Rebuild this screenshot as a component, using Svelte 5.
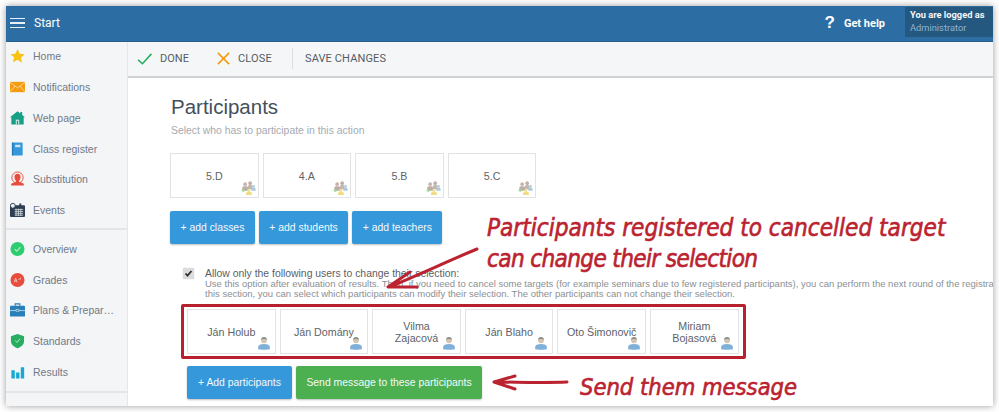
<script>
  const nav1 = [
    ['Home', 'star'], ['Notifications', 'mail'], ['Web page', 'house'],
    ['Class register', 'book'], ['Substitution', 'sub'], ['Events', 'cal']
  ];
  const nav2 = [
    ['Overview', 'ok'], ['Grades', 'grades'], ['Plans & Prepar…', 'case'],
    ['Standards', 'shield'], ['Results', 'bars']
  ];
  const classes = ['5.D', '4.A', '5.B', '5.C'];
  const people = ['Ján Holub', 'Ján Domány', 'Vilma\nZajacová', 'Ján Blaho', 'Oto Šimonovič', 'Miriam\nBojasová'];
</script>

{#snippet icon(kind)}
  <svg class="nav-icon" viewBox="0 0 16 16" width="16" height="16">
    {#if kind === 'star'}
      <path fill="#f6c213" d="M8 .6l2.3 4.9 5.3.7-3.9 3.7 1 5.4L8 12l-4.7 2.7 1-5.4L.4 6.2l5.3-.7z"/>
    {:else if kind === 'mail'}
      <rect y="2.5" width="16" height="11" fill="#f39c12"/>
      <path d="M0 3l8 6 8-6M0 13l5.5-6M16 13l-5.5-6" fill="none" stroke="#fbdca6" stroke-width=".9"/>
    {:else if kind === 'house'}
      <path fill="#16a085" d="M8 .8l3 2.4V1.6h2v3.2l3 2.4h-1.4V15H1.4V7.2H0z"/>
      <rect x="6.2" y="9.8" width="3.6" height="5.2" fill="#e6f3f0"/><rect x="7.2" y="10.8" width="1.6" height="4.2" fill="#16a085"/>
    {:else if kind === 'book'}
      <rect x="2.5" y="1" width="11" height="14" rx="1" fill="#3498db"/>
      <rect x="2" y="1" width="1.4" height="14" fill="#2578b5"/>
      <rect x="5.5" y="3.5" width="5.5" height="2.6" fill="#cfe6f7"/>
    {:else if kind === 'sub'}
      <circle cx="8" cy="6.5" r="6" fill="none" stroke="#e74c3c" stroke-width="1"/>
      <path fill="#e74c3c" d="M8 2.5a3.2 3.6 0 0 1 3.2 3.8c0 1.6-.8 2.8-1.6 3.6v1l4.2 1.6c.8.4 1 1.2 1 2.5H1.2c0-1.3.2-2.1 1-2.5l4.2-1.6v-1C5.600 9.100 4.800 7.900 4.800 6.300A3.200 3.600 0 0 1 8 2.500z"/>
    {:else if kind === 'cal'}
      <rect y="3" width="16" height="12.500" rx="1" fill="#2c3e50"/>
      <circle cx="3" cy="3.500" r="2.600" fill="#ecf0f1" stroke="#2c3e50"/>
      <rect x="10" y="1" width="2" height="3" fill="#2c3e50"/>
      <path d="M5 7.500h9M5 9.500h9M5 11.500h9M5 13.500h9M6.500 6.500v8M9 6.500v8M11.500 6.500v8" stroke="#dfe4e8" stroke-width=".8"/>
    {:else if kind === 'ok'}
      <circle cx="8" cy="8" r="7.500" fill="#2ecc71"/>
      <path d="M5 8.200l2.200 2.200L11 6" fill="none" stroke="#bff0d3" stroke-width="1.100"/>
    {:else if kind === 'grades'}
      <circle cx="8" cy="8" r="7.500" fill="#e74c3c"/>
      <path d="M4.500 10.500l1.500-4.500 1.500 4.500M5 9h2M9 8l1.500-1.500M11 5.500v2" fill="none" stroke="#f8c9c4" stroke-width=".9"/>
    {:else if kind === 'case'}
      <path d="M5.500 3.500V1.500h5v2" fill="none" stroke="#2980b9" stroke-width="1.200"/>
      <rect y="3.500" width="16" height="11.500" rx="1" fill="#2980b9"/>
      <path d="M0 8.600h16" stroke="#d5e8f5" stroke-width=".8"/>
      <rect x="6.500" y="7.500" width="3" height="2" fill="#2980b9" stroke="#d5e8f5" stroke-width=".6"/>
    {:else if kind === 'shield'}
      <path fill="#27ae60" d="M8 .5l7 2.500v5c0 3.700-3 6.300-7 7.800-4-1.500-7-4.100-7-7.800V3z"/>
      <path d="M5.500 7.500l2 2L10.700 5.500" fill="none" stroke="#bfeacf" stroke-width="1"/>
    {:else}
      <path fill="#17a9d1" d="M1.500 6h3.600v9H1.500zM6.500 8.500h3.600V15H6.500zM11.500 3h3.600v12h-3.600z"/>
    {/if}
  </svg>
{/snippet}

{#snippet group()}
  <svg class="badge" viewBox="0 0 18 18" width="18" height="18">
    <circle cx="5" cy="5" r="2.200" fill="#b39b8c"/><path fill="#a89488" d="M1.500 13V9.500C1.500 8 3 7.500 5 7.500s3.500.5 3.500 2V13z"/>
    <circle cx="11" cy="3.800" r="2.200" fill="#a8968c"/><path fill="#b0a094" d="M8 11V8c0-1.500 1.500-2 3-2s3 .5 3 2v3z"/>
    <circle cx="15" cy="7.500" r="1.800" fill="#9fc2d8"/><path fill="#8fb8d2" d="M12.500 13v-2c0-1.200 1-1.700 2.500-1.700s2.500.5 2.500 1.700v2z"/>
    <path fill="#7fd06a" d="M0 12.500l3-1.500 2 2-2 1.500z"/>
    <circle cx="9.500" cy="12.500" r="1.800" fill="#efd873"/><path fill="#ecd25a" d="M6 18v-2c0-1.200 1.500-1.800 3.500-1.800S13 14.800 13 16v2z"/>
  </svg>
{/snippet}

{#snippet person()}
  <svg class="pbadge" viewBox="0 0 18 18" width="18" height="18">
    <circle cx="9" cy="5.500" r="3.700" fill="#d4c4b0"/>
    <path fill="#8d8f8c" d="M5.300 5a3.700 3.700 0 0 1 7.400 0c-1-1-1.700-1.200-3.700-1.200S6.300 4 5.300 5z"/>
    <path fill="#7fb0da" d="M1.500 17v-3.300c0-2 3-3.500 7.500-3.500s7.500 1.500 7.500 3.500V17c-2 .8-13 .8-15 0z"/>
  </svg>
{/snippet}

<div class="frame">
  <header class="top">
    <div class="burger"><i></i><i></i><i></i></div>
    <span class="start">Start</span>
    <span class="spacer"></span>
    <span class="q">?</span>
    <span class="help">Get help</span>
    <div class="logged"><b>You are logged as</b><span>Administrator</span></div>
  </header>

  <div class="body">
    <nav class="side">
      {#each nav1 as [label, kind]}
        <div class="item">{@render icon(kind)}<span>{label}</span></div>
      {/each}
      <div class="sep"></div>
      {#each nav2 as [label, kind]}
        <div class="item">{@render icon(kind)}<span>{label}</span></div>
      {/each}
      <div class="sep last"></div>
    </nav>

    <div class="right">
      <div class="toolbar">
        <span class="tool done">
          <svg viewBox="0 0 18 14" width="16" height="12"><path d="M1 8l5 4.500L16.500 1" fill="none" stroke="#27ae60" stroke-width="1.800"/></svg>
          DONE
        </span>
        <span class="tool close">
          <svg viewBox="0 0 14 14" width="13" height="13"><path d="M1 1l12 12M13 1L1 13" fill="none" stroke="#f39c12" stroke-width="1.700"/></svg>
          CLOSE
        </span>
        <span class="divider"></span>
        <span class="tool save">SAVE CHANGES</span>
      </div>

      <main class="content">
        <h1>Participants</h1>
        <p class="sub">Select who has to participate in this action</p>

        <div class="tiles">
          {#each classes as c}
            <div class="tile"><span>{c}</span>{@render group()}</div>
          {/each}
        </div>

        <div class="btns">
          <button class="blue">+ add classes</button>
          <button class="blue">+ add students</button>
          <button class="blue">+ add teachers</button>
        </div>

        <div class="allow">
          <input type="checkbox" checked />
          <div class="allow-text">
            <div class="lead">Allow only the following users to change their selection:</div>
            <div class="note">Use this option after evaluation of results. Then, if you need to cancel some targets (for example seminars due to few registered participants), you can perform the next round of the registra</div>
            <div class="note">this section, you can select which participants can modify their selection. The other participants can not change their selection.</div>
          </div>
        </div>

        <div class="marked">
          {#each people as p}
            <div class="tile person"><span>{p}</span>{@render person()}</div>
          {/each}
        </div>

        <div class="btns second">
          <button class="blue">+ Add participants</button>
          <button class="green">Send message to these participants</button>
        </div>
      </main>
    </div>
  </div>

  <div class="hand h1">Participants registered to cancelled target<br /><span class="tight">can change their selection</span></div>
  <div class="hand h2">Send them message</div>
  <svg class="arrows" viewBox="0 0 987 400" width="987" height="400">
    <path d="M471 243C440 256 410 270 383 281M404 266L382 281 411 281" fill="none" stroke="#bb2330" stroke-width="3" stroke-linecap="round" stroke-linejoin="round"/>
    <path d="M561 376C535 377 510 376 488 376M509 370L488 376 509 383" fill="none" stroke="#bb2330" stroke-width="3" stroke-linecap="round" stroke-linejoin="round"/>
  </svg>
</div>

<style>
  :global(body) { margin: 0; background: #fff; }
  :global(#app) { padding: 6px; width: 987px; height: 400px; }
  .frame {
    position: relative;
    width: 987px; height: 400px;
    overflow: hidden;
    display: flex; flex-direction: column;
    background: #fff;
    box-shadow: 0 0 7px rgba(0,0,0,.4);
    font-family: "Liberation Sans", Arial, sans-serif;
  }
  .top {
    height: 35px; flex: none;
    background: #2c6ea3;
    display: flex; align-items: center;
    color: #fff;
    border-bottom: 1px solid #27608f;
    box-sizing: content-box;
  }
  .burger { margin-left: 4px; width: 15px; display: flex; flex-direction: column; gap: 3px; margin-top: -1px; }
  .burger i { display: block; height: 1.5px; background: #e9f1f7; }
  .start { margin-left: 9px; font: 12px "Roboto", sans-serif; margin-top: -2px; }
  .spacer { flex: 1; }
  .q { font: bold 17px "Liberation Sans", sans-serif; margin-right: 9px; margin-top: -1px; }
  .help { font: bold 11px "Roboto", sans-serif; margin-right: 20px; margin-top: -1px; }
  .logged {
    width: 88px; height: 30px; align-self: flex-start;
    background: #24587f;
    display: flex; flex-direction: column;
    padding: 2px 0 0 5px; box-sizing: border-box;
    font: 9.300px/12.500px "Roboto", sans-serif;
    margin-top: 1px;
  }
  .logged b { color: #f2f6f9; font-weight: 700; }
  .logged span { color: #8fb3cf; }
  .body { flex: 1; display: flex; min-height: 0; }
  .side {
    width: 121px; flex: none;
    background: #f4f5f7;
    border-right: 1px solid #e4e6ea;
    box-sizing: content-box;
  }
  .item {
    height: 30.700px; display: flex; align-items: center;
    color: #707a88; font: 10.500px "Liberation Sans", sans-serif;
    white-space: nowrap;
    position: relative; top: -.9px;
  }
  .nav-icon { margin-left: 4px; margin-right: 8px; flex: none; width: 15px; }
  .sep { height: 1.500px; background: #e3e5e9; margin: 2px 0 5px; }
  .sep.last { margin-top: 3px; }
  .right { flex: 1; display: flex; flex-direction: column; min-width: 0; }
  .toolbar {
    height: 33px; padding-bottom: 1px; flex: none; box-sizing: content-box;
    background: #f5f6f8;
    border-bottom: 2px solid #cfd1d3;
    display: flex; align-items: center;
    color: #555c63; font: 11px "Roboto", sans-serif;
  }
  .tool { display: inline-flex; align-items: center; }
  .done { margin-left: 9px; gap: 7px; }
  .close { margin-left: 28px; gap: 8px; letter-spacing: .2px; }
  .divider { width: 1px; height: 21px; background: #dcdee1; margin: 0 12px 0 20px; }
  .save { letter-spacing: .12px; }
  .content { padding: 0 0 0 42px; flex: 1; min-width: 0; }
  h1 { margin: 17px 0 0 1px; font: 400 20.500px/24px "Liberation Sans", sans-serif; color: #45505c; }
  .sub { margin: 5px 0 0 1px; font: 10.400px/13px "Liberation Sans", sans-serif; color: #a5abb2; }
  .tiles { display: flex; gap: 4px; margin-top: 16px; }
  .tile {
    position: relative;
    width: 88.600px; height: 45px; box-sizing: border-box;
    border: 1px solid #e3e3e3; background: #fff;
    display: flex; align-items: center; justify-content: center;
    font-size: 10.700px; color: #5d6269; text-align: center; line-height: 12px;
    white-space: pre;
  }
  .badge { position: absolute; right: 2px; bottom: 2px; width: 15px; height: 15px; opacity: .75; }
  .pbadge { position: absolute; right: 4px; bottom: 3px; width: 14px; height: 14px; }
  .btns { display: flex; gap: 4px; margin-top: 13px; }
  button {
    height: 33px; border: 0; border-radius: 2px; color: #f4f9fc;
    font: 10.400px "Liberation Sans", sans-serif;
    box-shadow: 0 1px 2px rgba(0,0,0,.25);
    padding: 0 10.500px;
  }
  .second .blue { padding: 0 11px; }
  .blue { background: #3498db; }
  .green { background: #4caf50; }
  .allow { display: flex; margin: 24px 0 0 13px; white-space: nowrap; }
  input {
    appearance: none;
    margin: 0; width: 11px; height: 11px; flex: none;
    background: #dcdcdc url("data:image/svg+xml,%3Csvg xmlns='http://www.w3.org/2000/svg' viewBox='0 0 11 11'%3E%3Cpath d='M2.500 5.500l2 2.200 4-4.700' fill='none' stroke='%23333' stroke-width='1.800'/%3E%3C/svg%3E") center/11px no-repeat;
    border-radius: 2px;
    box-shadow: 0 0 1px #aaa;
  }
  .allow-text { margin-left: 11px; font-size: 9.500px; line-height: 10.200px; }
  .lead { color: #5b6068; font-size: 10.400px; line-height: 11px; }
  .note { color: #8b8f94; }
  .marked {
    display: flex; gap: 4px;
    width: 565px; height: 55px; box-sizing: border-box;
    border: 3px solid #b9202e; border-radius: 2px;
    margin: 5px 0 0 11px;
    padding: 2px 3px;
  }
  .second { margin: 7px 0 0 17px; }
  .hand {
    position: absolute;
    color: #bb2330;
    font-family: "DejaVu Sans Condensed", "DejaVu Sans", sans-serif;
    font-style: oblique;
    -webkit-text-stroke: .6px #bb2330;
    white-space: nowrap;
  }
  .tight { letter-spacing: -.65px; }
  .h1 { left: 481px; top: 207px; font-size: 24.100px; line-height: 31px; }
  .h2 { left: 574px; top: 366px; font-size: 23.500px; line-height: 31px; }
  .arrows { position: absolute; left: 0; top: 0; pointer-events: none; }
</style>
